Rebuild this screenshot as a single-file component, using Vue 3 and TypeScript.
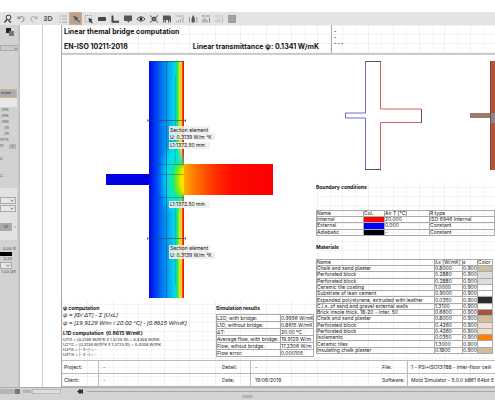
<script setup lang="ts">
interface Row { name: string; lambda: string; eps: string; tone: string }

const tools = [
  'zoom', 'undo', 'redo', '3d', 'list', 'pick', 'area', 'block', 'corner',
  'note', 'eye', 'mesh', 'film', 'chart', 'flame', 'minmax', 'temp', 'columns',
]

const units = ['/mK', '/mK', '/mK', '/m', '/m', '/m²K']

const boundaries = [
  { name: 'Internal', tone: 'red', air: '20.000', type: 'ISO 6946 Internal' },
  { name: 'External', tone: 'blue', air: '0.000', type: 'Constant' },
  { name: 'Adiabatic', tone: 'black', air: '-', type: 'Constant' },
]

const materials: Row[] = [
  { name: 'Chalk and sand plaster', lambda: '0.8000', eps: '0.900', tone: 'sand' },
  { name: 'Perforated block', lambda: '0.2880', eps: '0.900', tone: 'grey' },
  { name: 'Perforated block', lambda: '0.2880', eps: '0.900', tone: 'grey' },
  { name: 'Ceramic tile coating', lambda: '1.0000', eps: '0.900', tone: 'none' },
  { name: 'Substrate of lean cement', lambda: '0.9000', eps: '0.900', tone: 'none' },
  { name: 'Expanded polystyrene, extruded with leather', lambda: '0.0350', eps: '0.900', tone: 'coal' },
  { name: 'C.l.s. of sand and gravel external walls', lambda: '1.3100', eps: '0.900', tone: 'none' },
  { name: 'Brick insole thick. 18-20 - Inter. 50', lambda: '0.6600', eps: '0.900', tone: 'brick' },
  { name: 'Chalk and sand plaster', lambda: '0.8000', eps: '0.900', tone: 'sand' },
  { name: 'Perforated block', lambda: '0.4260', eps: '0.900', tone: 'cream' },
  { name: 'Perforated block', lambda: '0.4260', eps: '0.900', tone: 'cream' },
  { name: 'Isolamento', lambda: '0.0350', eps: '0.900', tone: 'orange' },
  { name: 'Ceramic tiles', lambda: '1.3000', eps: '0.900', tone: 'none' },
  { name: 'Insulating chalk plaster', lambda: '0.1800', eps: '0.900', tone: 'sand' },
]

const results = [
  ['L2D, with bridge:', '0.9956 W/mK'],
  ['L1D, without bridge:', '0.8615 W/mK'],
  ['ΔT:', '20.00 °C'],
  ['Average flow, with bridge:', '19.9129 W/m'],
  ['Flow, wihout bridge:', '17.2306 W/m'],
  ['Flow error:', '0.000105'],
]

const terms = [
  'U1*l1 = (0.3139 W/m²K x 1.3725 m) = 0.4308 W/mK',
  'U2*l2 = (0.3139 W/m²K x 1.3725 m) = 0.4308 W/mK',
  'U3*l3 = [- x -] = -',
  'U4*l4 = [- x -] = -',
]
</script>

<template>
  <div class="app">
    <nav class="toolbar">
      <button v-for="t in tools" :key="t" class="tool" :class="{ on: t === 'pick', wide: t === '3d' }" :aria-label="t">
        <span v-if="t === '3d'" class="three">3D</span>
        <svg v-else viewBox="0 0 12 12" fill="none" stroke="#555" stroke-width="1">
          <template v-if="t === 'zoom'"><circle cx="6.5" cy="4.5" r="2.4" stroke="#333" /><path d="M5 6.5 2.5 9.5M6.5 7.5 9 9.5" stroke="#333" stroke-width="1.3" /></template>
          <path v-else-if="t === 'undo'" d="M3 5.5C5 3 9 3 9 5.5S7.500 8.500 6.500 8.800M5.500 5.500H3V3.200" stroke="#888" />
          <path v-else-if="t === 'redo'" d="M9 5.500C7 3 3 3 3 5.500S4.500 8.500 5.500 8.800M6.500 5.500H9V3.200" stroke="#aaa" />
          <path v-else-if="t === 'list'" d="M2.500 3h1.500M5 3h5M2.500 6h1.500M5 6h5M2.500 9h1.500M5 9h5" stroke="#aaa" />
          <template v-else-if="t === 'pick'"><path d="M4 3l1 5 1-1.500L9 9.500l.8-.8L7 6l1.500-1z" fill="#444" stroke="none" /><path d="M3 3 9 9" stroke="#666" /></template>
          <template v-else-if="t === 'area'"><path d="M2 2.500h6.500v6.500H2z" stroke="#999" stroke-dasharray="1 1" /><path d="M5.500 5l.8 4.500 1-1 1.700 2 .8-.8L8.200 7.500 9.500 6.500z" fill="#333" stroke="none" /></template>
          <path v-else-if="t === 'block'" d="M2.500 4.500h7v3h-7z" fill="#444" stroke="#444" />
          <path v-else-if="t === 'corner'" d="M3.500 2.500v6.200h6.500" stroke="#444" stroke-width="2" />
          <path v-else-if="t === 'note'" d="M2 2.500h8v5.500H7.500L6 10 5.500 8H2z" fill="#555" stroke="none" />
          <template v-else-if="t === 'eye'"><path d="M2 6C4 3.200 8 3.200 10 6 8 8.800 4 8.800 2 6z" stroke="#444" /><circle cx="6" cy="6" r="1.400" fill="#222" stroke="none" /></template>
          <template v-else-if="t === 'mesh'"><path d="M2 2.500 10 9.500M10 2.500 2 9.500" stroke="#555" /><circle cx="6" cy="6" r="2" stroke="#444" fill="#777" /></template>
          <path v-else-if="t === 'film'" d="M2 2.500h7L10 4v5.500H8.800V7H8v2.500H7V7H5v2.500H4V7H3.200v2.500H2z" fill="#555" stroke="none" />
          <path v-else-if="t === 'chart'" d="M2.500 3h7M2.500 9.500V8M4.500 9.500V7M6.500 9.500V6M9 9.500V4" stroke="#aaa" />
          <template v-else-if="t === 'flame'"><path d="M6 2C8.500 5 8 8 7.500 9.500H4.800C4 7.500 4.500 5 6 2z" fill="#555" stroke="none" /><path d="M2.500 4v5.500M9.800 4v5.500" stroke="#999" /></template>
          <path v-else-if="t === 'minmax'" d="M2 3h3M6 3h4M3 9.500V6M5 9.500V5M7 9.500V7M9.500 9.500V5" stroke="#888" />
          <path v-else-if="t === 'temp'" d="M2 3h3M6 3h3M3 9.500V7M5 9.500V5M7 9.500V6M9.500 9.500V4" stroke="#bbb" />
          <path v-else d="M2.500 2.500h7v7h-7zM5 2.500v7M7.500 2.500v7" fill="#aaa" stroke="#999" />
        </svg>
      </button>
    </nav>

    <div class="work">
      <aside class="panel">
        <svg class="layers" viewBox="0 0 10 8"><path d="M1 0h5v5H1z" fill="#222" /><path d="M4 3h5v5H4z" fill="#777" /></svg>
        <button class="drop top" aria-label="View"><svg viewBox="0 0 7 6"><path d="M1.500 2l2 2 2-2" /></svg></button>
        <button class="simulate">imulate</button>
        <div class="blank"></div>
        <ul class="units">
          <li v-for="(u, i) in units" :key="i">{{ u }}</li>
        </ul>
        <div class="pair"><span>m</span><button>&lt;</button></div>
        <span class="faint">0</span>
        <span class="faint last">C</span>
        <section class="group">
          <button class="drop" aria-label="Type"><svg viewBox="0 0 7 6"><path d="M1.500 2l2 2 2-2" /></svg></button>
          <button class="drop" aria-label="Mode"><svg viewBox="0 0 7 6"><path d="M1.500 2l2 2 2-2" /></svg></button>
          <div class="default"><button>ult</button><span>=</span></div>
        </section>
        <div class="scale">
          <span>0.00 m</span>
          <i></i>
          <span class="in">0.20</span>
          <button class="drop short" aria-label="Scale"><svg viewBox="0 0 7 6"><path d="M1.500 2l2 2 2-2" /></svg></button>
          <span>1.00 µm</span>
        </div>
      </aside>

      <main class="desk">
        <div class="margin"></div>
        <article class="sheet">
          <header class="head">
            <div class="title">
              <h1>Linear themal bridge computation</h1>
              <div class="sub"><h2>EN-ISO 10211:2018</h2><h2>Linear transmittance ψ: 0.1341 W/mK</h2></div>
            </div>
            <div class="notes"><p>-</p><p>-</p><p>- - -</p></div>
          </header>

          <div class="body">
            <section class="left">
              <svg class="thermal" viewBox="0 0 254 246">
                <defs>
                  <linearGradient id="wall">
                    <stop offset="0" stop-color="#0008e0" />
                    <stop offset=".15" stop-color="#0030fa" />
                    <stop offset=".4" stop-color="#0080f2" />
                    <stop offset=".55" stop-color="#00a6f4" />
                    <stop offset=".74" stop-color="#00dcee" />
                    <stop offset=".81" stop-color="#20e070" />
                    <stop offset=".86" stop-color="#b8f000" />
                    <stop offset=".91" stop-color="#ffd800" />
                    <stop offset=".95" stop-color="#ff5000" />
                    <stop offset="1" stop-color="#f00800" />
                  </linearGradient>
                  <linearGradient id="slab">
                    <stop offset="0" stop-color="#ffb400" />
                    <stop offset=".12" stop-color="#ff7a00" />
                    <stop offset=".35" stop-color="#ff3000" />
                    <stop offset=".55" stop-color="#fe0a00" />
                    <stop offset="1" stop-color="#fa0000" />
                  </linearGradient>
                  <clipPath id="core"><rect x="87" y="6" width="35" height="237" /></clipPath>
                  <filter id="soft" x="-50%" y="-50%" width="200%" height="200%"><feGaussianBlur stdDeviation="3" /></filter>
                  <filter id="softer" x="-50%" y="-50%" width="200%" height="200%"><feGaussianBlur stdDeviation="1.5" /></filter>
                </defs>
                <rect x="44" y="119" width="44" height="11" fill="#0000e6" />
                <rect x="87" y="6" width="35" height="237" fill="url(#wall)" />
                <rect x="119" y="6" width="1" height="237" fill="#f4c878" />
                <rect x="121" y="109" width="90" height="31" fill="url(#slab)" />
                <g clip-path="url(#core)">
                  <ellipse cx="112" cy="124" rx="10" ry="32" fill="#00e4ec" filter="url(#soft)" />
                  <ellipse cx="117" cy="125" rx="8" ry="20" fill="#20e870" filter="url(#soft)" />
                  <ellipse cx="119" cy="125" rx="6" ry="16" fill="#80f000" filter="url(#softer)" />
                  <ellipse cx="123" cy="125" rx="6" ry="14" fill="#ffe400" filter="url(#softer)" />
                </g>
                <g stroke="#28445c" stroke-opacity=".6" fill="none">
                  <path d="M104.500 6v237" />
                  <path d="M96.500 6v103M96.500 142v101M113.500 20v88M113.500 150v80" stroke-opacity=".25" />
                  <path d="M86 65.500h38M86 183.500h38M87 6.500h35" />
                  <path d="M87 109.500h35M87 119.500h35M87 142.500h35" stroke-opacity=".4" />
                  <path d="M85.500 64v3M123.500 64v3M85.500 182v3M123.500 182v3" />
                </g>
                <g class="tags">
                  <rect x="107" y="71" width="41" height="7" /><text x="108" y="77">Section element</text>
                  <rect x="107" y="78" width="46" height="7" /><text x="108" y="84">U: 0.3139 W/m ²K</text>
                  <rect x="107" y="87" width="41" height="7" /><text x="108" y="92">L1:1372.50 mm</text>
                  <rect x="107" y="146" width="41" height="7" /><text x="108" y="151">L1:1372.50 mm</text>
                  <rect x="107" y="190" width="41" height="7" /><text x="108" y="195">Section element</text>
                  <rect x="107" y="197" width="46" height="7" /><text x="108" y="202">U: 0.3139 W/m ²K</text>
                </g>
              </svg>
              <div class="calc">
                <div class="formulas">
                  <h3>ψ computation</h3>
                  <p class="eq">ψ = [Φ/ ΔT] - Σ [UxL]</p>
                  <p class="eq gap">ψ = [19.9129 W/m / 20.00 °C] - [0.8615 W/mK]</p>
                  <h3>L1D computation&nbsp; (0.8615 W/mK)</h3>
                  <p v-for="t in terms" :key="t" class="term">{{ t }}</p>
                </div>
                <div class="results">
                  <h3>Simulation results</h3>
                  <table>
                    <tbody>
                      <tr v-for="r in results" :key="r[0]"><th scope="row">{{ r[0] }}</th><td>{{ r[1] }}</td></tr>
                    </tbody>
                  </table>
                </div>
              </div>
            </section>

            <section class="right">
              <div class="drawings">
                <svg class="outline" viewBox="0 0 110 110" fill="none">
                  <path d="M49.500 1v51h-20v5h20v52" stroke="#6c6cd8" />
                  <path d="M64.500 1v47h41M105 61.500h-40.500v48" stroke="#d06464" />
                  <path d="M49 .5h16M49 108.500h16M105.500 48v14" stroke="#555" />
                </svg>
                <svg class="build" viewBox="0 0 60 110">
                  <path d="M20 0h14v109H20z" fill="#b5523c" />
                  <path d="M0 52h21v5H0z" fill="#9c7c6e" />
                  <path d="M21 52h20v10H21z" fill="#888" />
                  <path d="M20.500 0v109" stroke="#8c4434" />
                </svg>
              </div>
              <h3>Boundary conditions</h3>
              <table class="bounds">
                <thead><tr><th>Name</th><th>Col.</th><th>Air T [°C]</th><th>R type</th></tr></thead>
                <tbody>
                  <tr v-for="b in boundaries" :key="b.name"><td>{{ b.name }}</td><td :class="b.tone"></td><td>{{ b.air }}</td><td>{{ b.type }}</td></tr>
                </tbody>
              </table>
              <h3>Materials</h3>
              <table class="mats">
                <thead><tr><th>Name</th><th>λx [W/mK]</th><th>ε</th><th>Color</th></tr></thead>
                <tbody>
                  <tr v-for="(m, i) in materials" :key="i"><td>{{ m.name }}</td><td>{{ m.lambda }}</td><td>{{ m.eps }}</td><td :class="m.tone"></td></tr>
                </tbody>
              </table>
            </section>
          </div>

          <table class="foot">
            <tbody>
              <tr><th scope="row">Project:</th><td>-</td><th scope="row">Detail:</th><td>-</td><th scope="row">File:</th><td>1 - PSI+ISO13788 - Inter-floor ceili</td></tr>
              <tr><th scope="row">Client:</th><td>-</td><th scope="row">Date:</th><td>19/06/2019</td><th scope="row">Software:</th><td>Mold Simulator - 5.0.0 b861 64bit E</td></tr>
            </tbody>
          </table>
        </article>
      </main>
    </div>

    <footer class="status">
      <div class="timeline">
        <span class="bar"></span><span class="knob"></span>
        <label for="time">Time:</label><input id="time" type="text" />
        <span class="dash">-</span>
        <svg viewBox="0 0 10 5"><path d="M0 2.500 3 0v1l1-1v1l2-1v5L4 4v1L3 4v1z" fill="#333" /></svg>
        <span class="track"></span>
      </div>
      <p>Done</p>
    </footer>
  </div>
</template>

<style>
body { margin: 0; background: #fff; }
</style>

<style scoped>
.app {
  display: flex;
  flex-direction: column;
  min-height: 100vh;
  box-sizing: border-box;
  padding-top: 12px;
  overflow: hidden;
  font: 5px/7px Inter, "Liberation Sans", Arial, sans-serif;
  color: #222;
}
h1, h2, h3, p, ul { margin: 0; padding: 0; }
button {
  font: inherit;
  color: inherit;
  padding: 0;
  margin: 0;
  border: 0;
  background: none;
}
.toolbar {
  display: flex;
  flex: none;
  align-items: center;
  height: 13px;
  padding-left: 1px;
  background: #e3e3e3;
}
.tool { display: flex; flex: none; align-items: center; justify-content: center; width: 13px; height: 13px; }
.tool svg { width: 12px; height: 12px; }
.tool.on { background: #b8a392; outline: 1px solid #d2a888; outline-offset: -1px; }
.tool.wide { width: 16px; }
.three { font: bold 7px/12px "Liberation Sans", Arial, sans-serif; color: #555; }

.work { display: flex; flex: 1; background: #fff; }
.panel {
  display: flex;
  flex-direction: column;
  align-items: flex-start;
  flex: none;
  width: 18px;
  overflow: hidden;
  background: #d2d2d2;
  border-right: 2px solid #c2c2c2;
  font-size: 4px;
  line-height: 6px;
  color: #555;
}
.layers { width: 10px; height: 8px; margin: 3px 0 9px 5px; }
.drop {
  display: flex;
  align-items: center;
  justify-content: flex-end;
  width: 16px;
  height: 7px;
  box-sizing: border-box;
  background: #e6e6e6;
  border: 1px solid #aaa;
}
.drop svg { width: 6px; height: 5px; fill: none; stroke: #666; }
.drop.top { width: 20px; height: 6px; background: #cacaca; }
.drop.short { width: 12px; }
.simulate {
  width: 17px;
  height: 9px;
  margin-top: 38px;
  padding-right: 4px;
  background: #adadad;
  border: 1px solid #d0b48c;
  border-left: 0;
  box-sizing: border-box;
  font-size: 3px;
  line-height: 7px;
  color: #333;
}
.blank { width: 17px; height: 9px; background: #e8e8e8; }
.units { list-style: none; display: flex; flex-direction: column; align-items: flex-end; width: 9px; }
.pair { display: flex; align-items: center; justify-content: space-between; width: 16px; }
.pair button { width: 7px; height: 5px; background: #b6b6b6; line-height: 5px; }
.faint { height: 19px; line-height: 19px; }
.faint.last { height: 16px; line-height: 16px; }
.group { width: 17px; margin-top: 4px; padding: 9px 0; background: #e2e2e2; }
.group .drop { margin-bottom: 1px; }
.default { display: flex; align-items: center; gap: 2px; margin-top: 11px; }
.default button { width: 12px; height: 8px; background: #aaa; }
.scale { display: flex; flex-direction: column; align-items: flex-end; width: 16px; padding-top: 6px; }
.scale i { align-self: flex-start; width: 12px; height: 4px; background: #000; }
.scale .drop { align-self: flex-start; }
.scale .in { padding-right: 4px; }

.desk { display: flex; flex: 1; min-width: 0; }
.margin { flex: none; width: 22px; border-right: 1px solid #ccc; }
.sheet {
  display: flex;
  flex-direction: column;
  flex: 1;
  min-width: 0;
  overflow: hidden;
  margin-left: 18px;
  border-left: 1px solid #aaa;
  background:
    repeating-linear-gradient(to right, #f1f1f1 0 1px, transparent 1px 13px, #f7f7f7 13px 14px, transparent 14px 25px, #f1f1f1 25px 26px, transparent 26px 38px, #f7f7f7 38px 39px, transparent 39px 51px),
    repeating-linear-gradient(to bottom, #f4f4f4 0 1px, transparent 1px 9px);
}
.head { display: flex; flex: none; height: 30px; border-bottom: 2px solid #ccc; box-sizing: border-box; }
.title { display: flex; flex-direction: column; gap: 7px; width: 267px; padding: 3px 0 0 2px; border-right: 1px solid #aaa; }
.title h1, .title h2 { font-size: 7px; line-height: 8px; font-weight: 700; color: #111; white-space: nowrap; }
.sub { display: flex; justify-content: space-between; padding-right: 12px; }
.notes { padding: 3px 2px; line-height: 6px; font-weight: 700; }

.body { display: flex; flex: 1; }
.left { flex: none; width: 254px; }
.thermal { display: block; width: 254px; height: 246px; background: #fff; }
.tags rect { fill: #eee; fill-opacity: .9; }
.tags text { font-size: 5px; fill: #111; }
h3 { font-size: 5px; line-height: 8px; font-weight: 700; color: #111; white-space: nowrap; }
.calc { display: flex; padding: 3px 0 0 1px; }
.formulas { flex: none; width: 153px; white-space: nowrap; }
.eq { font-family: "Liberation Sans", Arial, sans-serif; font-size: 6px; font-style: italic; }
.eq.gap { margin: 1px 0 2px; }
.term { font-size: 4px; line-height: 5px; }
.results { flex: none; width: 98px; }
table { border-collapse: collapse; white-space: nowrap; table-layout: fixed; }
th, td { padding: 0; text-align: left; font-weight: 400; }
.results table, .bounds, .mats { width: 100%; line-height: 5px; }
.results table { height: 43px; margin-top: 2px; }
.results th, .results td, .bounds th, .bounds td, .mats th, .mats td { border: 1px solid #aaa; }
.results th { width: 63px; }

.right { flex: 1; min-width: 0; overflow: hidden; }
.drawings { display: flex; gap: 44px; height: 128px; padding-top: 6px; box-sizing: border-box; overflow: hidden; background: #fff; }
.drawings svg { flex: none; height: 110px; }
.outline { width: 110px; }
.build { width: 60px; }
.bounds { height: 26px; margin: 19px 0 7px; }
.bounds th:nth-child(1) { width: 46px; }
.bounds th:nth-child(2) { width: 20px; }
.bounds th:nth-child(3) { width: 44px; }
.mats { width: 177px; height: 95px; margin-top: 8px; }
.mats th:nth-child(2) { width: 27px; }
.mats th:nth-child(3) { width: 14px; }
.mats th:nth-child(4) { width: 14px; }
.red { background: #f00; }
.blue { background: #00f; }
.black { background: #000; }
.sand { background: #cdbd9c; }
.grey { background: #ddd; }
.coal { background: #2c2c2c; }
.brick { background: #aa543e; }
.cream { background: #ecdfcc; }
.orange { background: #ff8000; }

.foot { flex: none; width: 100%; border-top: 1px solid #aaa; }
.foot th, .foot td { height: 12px; padding-left: 2px; border: 1px solid #bbb; border-right: 0; }
.foot td { padding-left: 4px; }
.foot th { width: 34px; border-left: 0; }
.foot td:nth-child(2) { width: 117px; }
.foot th:nth-child(3) { width: 28px; }
.foot td:nth-child(4) { width: 125px; }
.foot th:nth-child(5) { width: 25px; }
.foot td:last-child { padding-left: 3px; }

.status { flex: none; background: #d3d3d3; border-top: 1px solid #aaa; font-size: 4px; line-height: 5px; color: #777; }
.timeline { display: flex; align-items: center; height: 6px; }
.bar { width: 15px; height: 5px; background: #b4b4b4; }
.knob { width: 5px; height: 5px; background: #777; margin-right: 2px; }
.timeline label { width: 10px; }
.timeline input { width: 29px; height: 5px; padding: 0; border: 1px solid #bbb; box-sizing: border-box; background: #ddd; font-size: 4px; }
.dash { padding: 0 7px; }
.timeline svg { width: 10px; height: 5px; }
.track { flex: 1; height: 1px; background: #aaa; }
.status p { text-align: center; line-height: 6px; }
</style>
